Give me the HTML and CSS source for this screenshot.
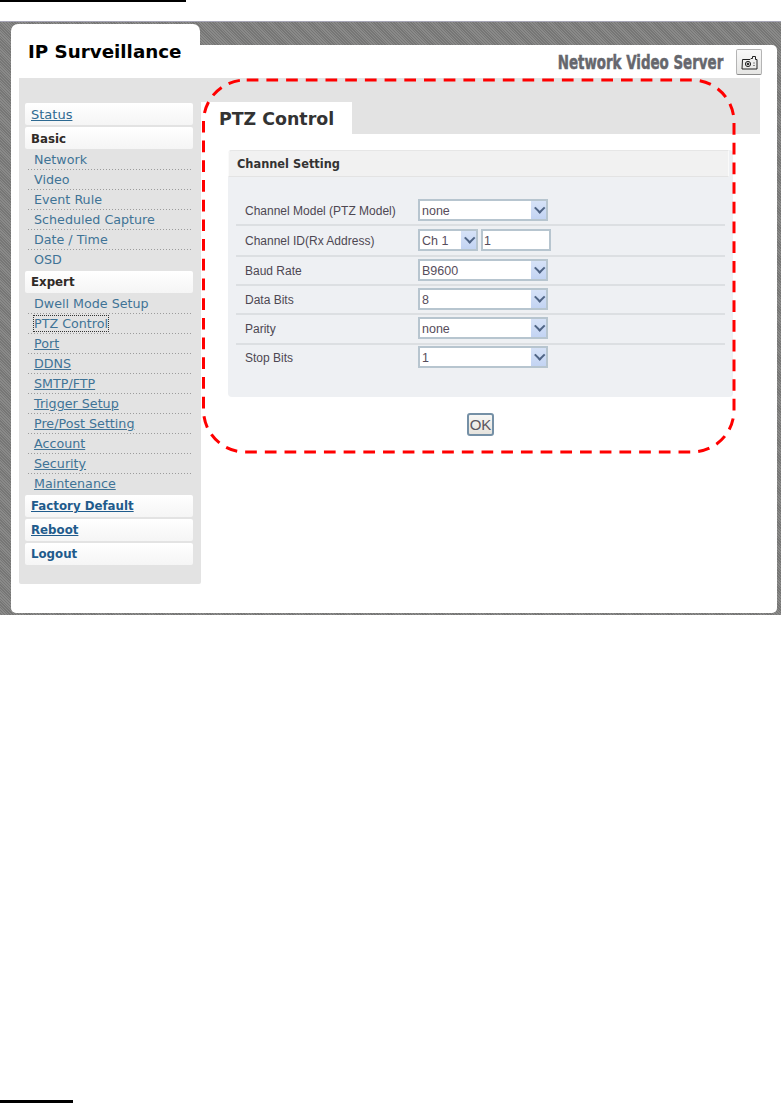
FILE: index.html
```html
<!DOCTYPE html>
<html lang="en">
<head>
<meta charset="utf-8">
<title>PTZ Control</title>
<link rel="stylesheet" href="styles.css">
</head>
<body>
<div class="rule rule-top"></div>
<div class="frame">
  <div class="brand-tab">IP Surveillance</div>
  <div class="card">
    <header class="head">
      <span class="product">Network Video Server</span>
      <button class="snap" type="button" aria-label="Snapshot">
        <svg width="17" height="15" viewBox="0 0 17 15" fill="none" stroke="#222" stroke-width="1">
          <path d="M1.5 4.5h7.5l1-1h1.5v-2h3v3h1.5v9.5h-15z"/>
          <circle cx="7" cy="9" r="2.6"/>
          <circle cx="7" cy="9" r="0.9" fill="#222"/>
          <path d="M13 7.5v1M13 10v1"/>
        </svg>
      </button>
    </header>
    <div class="main">
      <nav class="side">
        <a class="box box-link" href="#">Status</a>
        <div class="box box-basic">Basic</div>
        <ul class="sub">
          <li><a href="#" class="plain">Network</a></li>
          <li><a href="#" class="plain">Video</a></li>
          <li><a href="#" class="plain">Event Rule</a></li>
          <li><a href="#" class="plain">Scheduled Capture</a></li>
          <li><a href="#" class="plain">Date / Time</a></li>
          <li><a href="#" class="plain">OSD</a></li>
        </ul>
        <div class="box">Expert</div>
        <ul class="sub">
          <li><a href="#" class="plain">Dwell Mode Setup</a></li>
          <li><a href="#" class="plain focus">PTZ Control</a></li>
          <li><a href="#">Port</a></li>
          <li><a href="#">DDNS</a></li>
          <li><a href="#">SMTP/FTP</a></li>
          <li><a href="#">Trigger Setup</a></li>
          <li><a href="#">Pre/Post Setting</a></li>
          <li><a href="#">Account</a></li>
          <li><a href="#">Security</a></li>
          <li><a href="#">Maintenance</a></li>
        </ul>
        <a class="box box-strong" href="#">Factory Default</a>
        <a class="box box-strong" href="#">Reboot</a>
        <a class="box box-strong plain" href="#">Logout</a>
      </nav>
      <section class="content">
        <div class="tabbar"><h1 class="tab">PTZ Control</h1></div>
        <div class="panel">
          <h2 class="panel-title">Channel Setting</h2>
          <form class="rows">
            <div class="row">
              <label>Channel Model (PTZ Model)</label>
              <span class="sel"><select><option>none</option></select><i class="arrow"></i></span>
            </div>
            <div class="row">
              <label>Channel ID(Rx Address)</label>
              <span class="sel sel-small"><select><option>Ch 1</option></select><i class="arrow"></i></span>
              <input class="addr" type="text" value="1">
            </div>
            <div class="row">
              <label>Baud Rate</label>
              <span class="sel"><select><option>B9600</option></select><i class="arrow"></i></span>
            </div>
            <div class="row">
              <label>Data Bits</label>
              <span class="sel"><select><option>8</option></select><i class="arrow"></i></span>
            </div>
            <div class="row">
              <label>Parity</label>
              <span class="sel"><select><option>none</option></select><i class="arrow"></i></span>
            </div>
            <div class="row">
              <label>Stop Bits</label>
              <span class="sel"><select><option>1</option></select><i class="arrow"></i></span>
            </div>
          </form>
        </div>
        <div class="actions"><button class="ok" type="button">OK</button></div>
      </section>
    </div>
  </div>
</div>
<svg class="callout" width="781" height="480" viewBox="0 0 781 480" fill="none">
  <rect x="203.5" y="80" width="530.5" height="372" rx="42" ry="42" stroke="#f00" stroke-width="3" stroke-dasharray="11.7 8" stroke-dashoffset="-1.2"/>
</svg>
<div class="rule rule-bottom"></div>
</body>
</html>
```
FILE: styles.css
```css
* { box-sizing: border-box; }
html, body { margin: 0; padding: 0; background: #fff; }
body { position: relative; width: 781px; height: 1103px; overflow: hidden; font-family: "Liberation Sans", Arial, sans-serif; }

.rule { background: #000; }
.rule-top { width: 186px; height: 2px; }
.rule-bottom { position: absolute; left: 0; bottom: 0; width: 73px; height: 3px; }

.frame {
  margin-top: 19px;
  height: 594px;
  padding-top: 2px;
  border-top: 1px solid #a5a4b4;
  background: repeating-linear-gradient(45deg, #8a8a89 0, #8a8a89 1px, #767675 1px, #767675 2px);
}
.brand-tab {
  margin-left: 11px;
  width: 189px;
  height: 21px;
  padding: 18px 0 0 17px;
  background: #fff;
  border-radius: 7px 7px 0 0;
  font: bold 18.3px/20px "DejaVu Sans", Verdana, sans-serif;
  color: #000;
  white-space: nowrap;
}
.card {
  margin: 0 4px 0 11px;
  height: 568px;
  background: #fff;
  border-radius: 0 5px 5px 5px;
  padding: 0 0 0 8px;
}
.head {
  height: 33px;
  display: flex;
  align-items: flex-start;
  justify-content: flex-end;
  gap: 13px;
  padding: 4px 15px 0 0;
}
.product {
  margin-top: 3px;
  font: bold 20px/20px "DejaVu Sans Condensed", "DejaVu Sans", sans-serif;
  color: #66676d;
  white-space: nowrap;
  transform: scaleX(0.745);
  transform-origin: right center;
  -webkit-text-stroke: 0.5px #66676d;
}
.snap {
  width: 26px;
  height: 26px;
  padding: 0;
  display: flex;
  align-items: center;
  justify-content: center;
  background: linear-gradient(#f8f8f8, #e6e6e4);
  border: 1px solid #b4b4b4;
  border-bottom-color: #8c8c8c;
  border-radius: 2px;
}

.main { display: flex; align-items: flex-start; }
.side {
  width: 182px;
  height: 506px;
  padding: 25px 8px 0 6px;
  background: #e3e3e3;
  border-radius: 0 0 2px 2px;
  font: 12.7px/20px "DejaVu Sans", Verdana, sans-serif;
  display: flex;
  flex-direction: column;
}
.box {
  display: block;
  height: 22px;
  padding-left: 6px;
  margin-bottom: 2px;
  background: linear-gradient(#ffffff, #f5f5f5);
  border-radius: 2px;
  font-weight: bold;
  font-size: 11.8px;
  line-height: 22px;
  color: #2f2a26;
}
.box-basic { line-height: 24px; }
.box-link { font-weight: normal; font-size: 13px; line-height: 24px; color: #2e6a92; text-decoration: underline; }
.box-strong { color: #1f5b8c; text-decoration: underline; }
.box-strong.plain { text-decoration: none; }
.sub { list-style: none; margin: -1px 0 1px; padding: 0 0 0 3px; }
.sub li {
  height: 20px;
  padding-left: 6px;
  line-height: 19px;
  margin-right: 1px;
  background: linear-gradient(90deg, #9c9c9c 1px, transparent 1px) left bottom / 3px 1px repeat-x;
}
.sub li:last-child { background: none; }
.sub a { color: #3f7396; text-decoration: underline; }
.sub a.plain { text-decoration: none; }
.sub a.focus { outline: 1px dotted #333; outline-offset: 0; }

.content { flex: 1; min-width: 0; }
.tabbar { width: 559px; height: 56px; padding-top: 24px; background: #e3e3e3; }
.tab {
  margin: 0;
  width: 151px;
  height: 32px;
  padding: 5px 0 0 18px;
  background: #fff;
  font: bold 17.4px/24px "DejaVu Sans", Verdana, sans-serif;
  color: #333;
}
.panel {
  margin: 16px 0 0 27px;
  width: 505px;
  height: 247px;
  background: #eef0f3;
  border-radius: 4px;
}
.panel-title {
  margin: 0 4px 0 0;
  height: 27px;
  padding-left: 8px;
  background: #f1f1f1;
  border: 1px solid #fafafa;
  border-top-color: #e6e6e6;
  border-bottom-color: #e3e3e3;
  border-radius: 4px 0 0 0;
  font: bold 11.4px/27px "DejaVu Sans", Verdana, sans-serif;
  color: #333;
}
.rows { padding: 21px 0 0 8px; width: 497px; }
.row {
  height: 29px;
  display: flex;
  align-items: flex-start;
  padding: 2px 0 0 9px;
  border-bottom: 2px solid #dcdfe2;
}
.row:nth-child(1) { height: 28px; padding-top: 1px; }
.row:nth-child(2) { height: 31px; padding-top: 3px; }
.row:nth-child(5) { height: 30px; }
.row:nth-child(6) { height: 24px; padding-top: 1px; border-bottom: 0; }
.row label { width: 173px; font-size: 12px; line-height: 24px; color: #4d4752; white-space: nowrap; }
.sel { position: relative; display: block; width: 130px; height: 22px; }
.sel-small { width: 60px; }
.sel select {
  display: block;
  width: 100%;
  height: 100%;
  padding: 2px 0 0 2px;
  appearance: none;
  background: #fff;
  border: 2px solid #b7c5cf;
  border-radius: 0;
  font: 12.5px "Liberation Sans", Arial, sans-serif;
  color: #574d5c;
}
.arrow {
  position: absolute;
  top: 2px;
  right: 2px;
  bottom: 2px;
  width: 15px;
  background: linear-gradient(#d6e2f7, #c3d4f3);
}
.arrow::after {
  content: "";
  position: absolute;
  left: 5px;
  top: 3px;
  width: 5.5px;
  height: 5.5px;
  border: solid #4f6485;
  border-width: 0 2px 2px 0;
  transform: rotate(45deg);
}
.addr {
  width: 70px;
  height: 22px;
  margin-left: 3px;
  padding: 2px 0 0 1px;
  background: #fff;
  border: 2px solid #b7c5cf;
  border-radius: 0;
  font: 12.5px "Liberation Sans", Arial, sans-serif;
  color: #574d5c;
}
.actions { width: 505px; margin-left: 27px; padding: 16px 0 0 239px; }
.ok {
  display: block;
  width: 27px;
  height: 23px;
  padding: 0;
  background: linear-gradient(#f7f7f5, #e6e3dd);
  border: 2px solid #7590a6;
  border-radius: 3px;
  font: 15px "Liberation Sans", Arial, sans-serif;
  color: #5a5560;
}

.callout { position: absolute; left: 0; top: 0; pointer-events: none; }
```
